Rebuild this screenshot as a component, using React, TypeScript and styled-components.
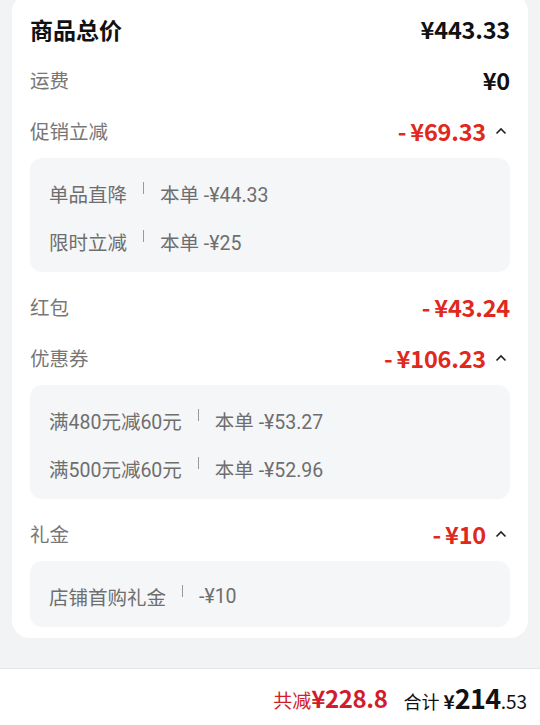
import styled, { createGlobalStyle } from "styled-components";

const GlobalStyle = createGlobalStyle`
  body {
    margin: 0;
    background: #f2f3f5;
    font-family: "Noto Sans CJK SC", "Noto Sans", sans-serif;
    overflow: hidden;
  }
`;

const Page = styled.div`
  height: 725px;
  display: flex;
  flex-direction: column;
`;

const Card = styled.section`
  margin: -6px 12px 0;
  padding: 9px 18px 2px;
  background: #fff;
  border-radius: 18px;
`;

const Row = styled.div`
  height: 51px;
  display: flex;
  align-items: center;
  justify-content: space-between;
`;

const Label = styled.span<{ $strong?: boolean }>`
  font-size: ${p => (p.$strong ? "23px" : "19.5px")};
  font-weight: ${p => (p.$strong ? 700 : 400)};
  color: ${p => (p.$strong ? "#111" : "#777")};
`;

const Amount = styled.span<{ $red?: boolean }>`
  display: flex;
  align-items: center;
  font-size: 23.5px;
  font-weight: 700;
  letter-spacing: -0.2px;
  color: ${p => (p.$red ? "#e0281c" : "#111")};
`;

const Minus = styled.span`
  margin-right: 4px;
`;

const Chevron = styled.svg`
  width: 12px;
  height: 8px;
  margin-left: 9px;
  margin-right: 3px;
`;

const DetailBox = styled.div`
  margin: 2px 0 9px;
  padding: 11px 19px 7px;
  background: #f5f6f8;
  border-radius: 12px;
`;

const DetailItem = styled.div`
  height: 48px;
  display: flex;
  align-items: center;
  font-family: Roboto, "Noto Sans CJK SC", sans-serif;
  font-size: 19.5px;
  color: #6e6e6e;
`;

const Divider = styled.i`
  width: 1px;
  height: 12px;
  margin: 0 16px 10px;
  background: #999;
`;

const BottomBar = styled.footer`
  margin-top: auto;
  height: 56px;
  padding-right: 13px;
  display: flex;
  align-items: center;
  justify-content: flex-end;
  background: #fff;
  border-top: 1px solid #e6e6e9;
`;

const Saved = styled.span`
  color: #d21c2c;
  font-size: 19px;
  margin-right: 16px;
  b {
    font-size: 24px;
    font-weight: 700;
    letter-spacing: -0.4px;
  }
`;

const Total = styled.span`
  color: #111;
  font-size: 18px;
  display: flex;
  align-items: baseline;
  b {
    font-weight: 700;
    margin-left: 4px;
    font-size: 19px;
  }
  strong {
    font-size: 27px;
    font-weight: 700;
    letter-spacing: -0.6px;
  }
  em {
    font-style: normal;
    font-size: 19px;
  }
`;

interface Section {
  label: string;
  amount: string;
  red?: boolean;
  strong?: boolean;
  details?: { name: string; value: string }[];
}

const sections: Section[] = [
  { label: "商品总价", amount: "¥443.33", strong: true },
  { label: "运费", amount: "¥0" },
  {
    label: "促销立减", amount: "¥69.33", red: true,
    details: [
      { name: "单品直降", value: "本单 -¥44.33" },
      { name: "限时立减", value: "本单 -¥25" },
    ],
  },
  { label: "红包", amount: "¥43.24", red: true },
  {
    label: "优惠券", amount: "¥106.23", red: true,
    details: [
      { name: "满480元减60元", value: "本单 -¥53.27" },
      { name: "满500元减60元", value: "本单 -¥52.96" },
    ],
  },
  {
    label: "礼金", amount: "¥10", red: true,
    details: [{ name: "店铺首购礼金", value: "-¥10" }],
  },
];

function ChevronUp() {
  return (
    <Chevron viewBox="0 0 12 8">
      <polyline points="1.5,6.5 6,2 10.5,6.5" fill="none" stroke="#222" strokeWidth="1.6" />
    </Chevron>
  );
}

export default function App() {
  return (
    <Page>
      <GlobalStyle />
      <Card>
        {sections.map(s => (
          <div key={s.label}>
            <Row>
              <Label $strong={s.strong}>{s.label}</Label>
              <Amount $red={s.red}>
                {s.red && <Minus>-</Minus>}
                {s.amount}
                {s.details && <ChevronUp />}
              </Amount>
            </Row>
            {s.details && (
              <DetailBox>
                {s.details.map(d => (
                  <DetailItem key={d.name}>
                    <span>{d.name}</span>
                    <Divider />
                    <span>{d.value}</span>
                  </DetailItem>
                ))}
              </DetailBox>
            )}
          </div>
        ))}
      </Card>
      <BottomBar>
        <Saved>共减<b>¥228.8</b></Saved>
        <Total>
          合计<b>¥</b><strong>214</strong><em>.53</em>
        </Total>
      </BottomBar>
    </Page>
  );
}
